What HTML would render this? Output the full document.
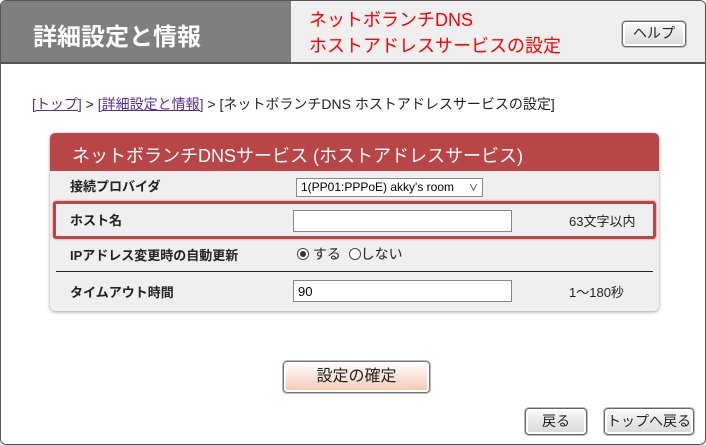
<!DOCTYPE html>
<html><head><meta charset="utf-8"><style>
*{margin:0;padding:0;box-sizing:border-box}
body{width:706px;height:445px;background:#fff;font-family:"Liberation Sans","Noto Sans CJK JP",sans-serif;position:relative;overflow:hidden}
.frame{position:absolute;left:0;top:0;width:706px;height:445px;border:1px solid #555;border-radius:6px;overflow:hidden}
.hl{position:absolute;left:0;top:0;width:290px;height:62px;background:#7f7f7f;color:#fff;font-size:24px;font-weight:bold;padding:16px 0 0 32px}
.hr{position:absolute;left:290px;top:0;width:416px;height:62px;background:#efefef;color:#f00;font-size:18px;line-height:26px;padding:6px 0 0 18px}
.hline{position:absolute;left:0;top:61px;width:706px;height:2px;background:#555}
.btn{position:absolute;border:1px solid #666;border-radius:4px;background:linear-gradient(#fafafa,#d8d8d8);box-shadow:inset 0 0 0 2px #fff, 0 0 0 1px #bbb;font-size:14px;text-align:center;color:#222}
.bc{position:absolute;left:31px;top:93px;font-size:14px;color:#222}
.bc a{color:#5a2a9a;text-decoration:underline}
.panel{position:absolute;left:49px;top:132px;width:609px;height:178px;background:#efefef;border-radius:5px;box-shadow:0 1px 3px #999}
.title{height:38px;background:#b94646;color:#fff;font-size:18px;padding:9px 0 0 22px;border-radius:5px 5px 0 0}
.lbl{position:absolute;left:20px;font-size:13px;font-weight:bold;color:#222}
.inp{position:absolute;left:243px;width:219px;height:22px;background:#fff;border:1px solid #888;font-size:13px;padding:3px 4px}
.note{position:absolute;left:519px;font-size:13px;color:#222}
</style></head><body>
<div class="frame">
<div class="hl">詳細設定と情報</div>
<div class="hr">ネットボランチDNS<br>ホストアドレスサービスの設定</div>
<div class="hline"></div>
<div class="btn" style="left:621px;top:20px;width:64px;height:26px;line-height:23px">ヘルプ</div>
<div class="bc"><a>[トップ]</a> &gt; <a>[詳細設定と情報]</a> &gt; [ネットボランチDNS ホストアドレスサービスの設定]</div>
<div class="panel">
<div class="title">ネットボランチDNSサービス (ホストアドレスサービス)</div>
<div class="lbl" style="top:43px">接続プロバイダ</div>
<div style="position:absolute;left:246px;top:45px;width:187px;height:19px;background:#fff;border:1px solid #888;font-size:12px;padding:1px 4px">1(PP01:PPPoE) akky's room <span style="float:right;font-size:9px;line-height:16px">∨</span></div>
<div style="position:absolute;left:3px;top:68px;width:603px;height:38px;border:3px solid #b94646;border-radius:3px;box-shadow:0 0 2px #c66"></div>
<div class="lbl" style="top:77px">ホスト名</div>
<div class="inp" style="top:77px"></div>
<div class="note" style="top:78px">63文字以内</div>
<div class="lbl" style="top:112px">IPアドレス変更時の自動更新</div>
<div style="position:absolute;left:247px;top:111px;font-size:14px;color:#222"><span style="display:inline-block;width:12px;height:12px;border:1px solid #444;border-radius:50%;vertical-align:-1px;position:relative;background:#fff"><span style="position:absolute;left:2px;top:2px;width:6px;height:6px;border-radius:50%;background:#333"></span></span> する &nbsp;<span style="display:inline-block;width:12px;height:12px;border:1px solid #444;border-radius:50%;vertical-align:-1px;background:#fff"></span>しない</div>
<div style="position:absolute;left:6px;top:138px;width:597px;height:1px;background:#222"></div>
<div class="lbl" style="top:149px">タイムアウト時間</div>
<div class="inp" style="top:147px">90</div>
<div class="note" style="top:149px">1～180秒</div>
</div>
<div class="btn" style="left:282px;top:360px;width:147px;height:32px;line-height:30px;font-size:16px;background:linear-gradient(#fff,#f5c8b0);border-color:#777">設定の確定</div>
<div class="btn" style="left:524px;top:407px;width:62px;height:27px;line-height:25px">戻る</div>
<div class="btn" style="left:603px;top:407px;width:90px;height:27px;line-height:25px">トップへ戻る</div>
</div>
</body></html>
